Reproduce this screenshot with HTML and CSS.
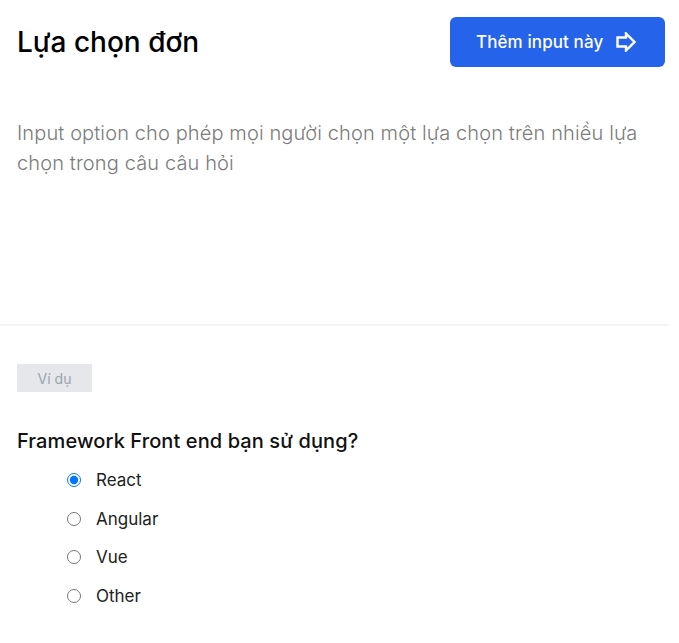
FILE: index.html
```html
<!DOCTYPE html>
<html lang="vi">
<head>
<meta charset="utf-8">
<title>Lựa chọn đơn</title>
<link rel="stylesheet" href="styles.css">
</head>
<body>
<div class="page">
  <section class="intro">
    <header class="header">
      <h1 class="title">Lựa chọn đơn</h1>
      <button class="add-btn" type="button">
        <span>Thêm input này</span>
        <svg class="add-icon" width="20" height="20" viewBox="0 0 20 20" fill="none" stroke="#fff" stroke-width="2.4" stroke-linejoin="miter">
          <path d="M1.5 5.5 H10 V1.5 L18.5 10 L10 18.5 V14.5 H1.5 Z"/>
        </svg>
      </button>
    </header>
    <p class="desc">Input option cho phép mọi người chọn một lựa chọn trên nhiều lựa chọn trong câu câu hỏi</p>
  </section>
  <section class="example">
    <span class="badge">Ví dụ</span>
    <h2 class="question">Framework Front end bạn sử dụng?</h2>
    <div class="options">
      <label class="option"><input type="radio" name="fw" checked><span>React</span></label>
      <label class="option"><input type="radio" name="fw"><span>Angular</span></label>
      <label class="option"><input type="radio" name="fw"><span>Vue</span></label>
      <label class="option"><input type="radio" name="fw"><span>Other</span></label>
    </div>
  </section>
</div>
</body>
</html>
```

FILE: styles.css
```css
* { box-sizing: border-box; }
html, body { margin: 0; padding: 0; background: #fff; }
body {
  font-family: Inter, "Noto Sans", sans-serif;
  color: #111;
}
.page {
  width: 669px;
}
.intro {
  height: 326px;
  padding: 17px 4px 0 17px;
  border-bottom: 2px solid #f3f4f6;
}
.header {
  display: flex;
  align-items: center;
  justify-content: space-between;
  height: 50px;
}
.title {
  margin: 0;
  font-size: 28px;
  font-weight: 500;
  color: #000;
}
.add-btn {
  display: flex;
  align-items: center;
  gap: 13px;
  width: 215px;
  height: 50px;
  padding: 0 0 0 26px;
  border: none;
  border-radius: 6px;
  background: #2563eb;
  color: #fff;
  font-family: Inter, "Noto Sans", sans-serif;
  font-size: 17px;
  font-weight: 500;
  letter-spacing: 0.1px;
}
.add-icon { display: block; }
.desc {
  margin: 51px 0 0;
  font-size: 20px;
  line-height: 30px;
  color: #7b7b7b;
  font-weight: 300;
  letter-spacing: 0.12px;
}
.example {
  padding: 38px 0 0 17px;
}
.badge {
  display: inline-flex;
  align-items: center;
  justify-content: center;
  width: 75px;
  height: 28px;
  background: #e5e7eb;
  color: #9ca3af;
  font-size: 14px;
}
.question {
  margin: 35px 0 0;
  font-size: 20px;
  line-height: 28px;
  font-weight: 500;
  color: #111;
  letter-spacing: 0.1px;
}
.options {
  display: flex;
  flex-direction: column;
  margin-top: 6px;
  padding-left: 50px;
}
.option {
  display: flex;
  align-items: center;
  gap: 15px;
  height: 38.5px;
  font-size: 17px;
  color: #222;
}
.option input {
  margin: 0;
  width: 14px;
  height: 14px;
}
```
